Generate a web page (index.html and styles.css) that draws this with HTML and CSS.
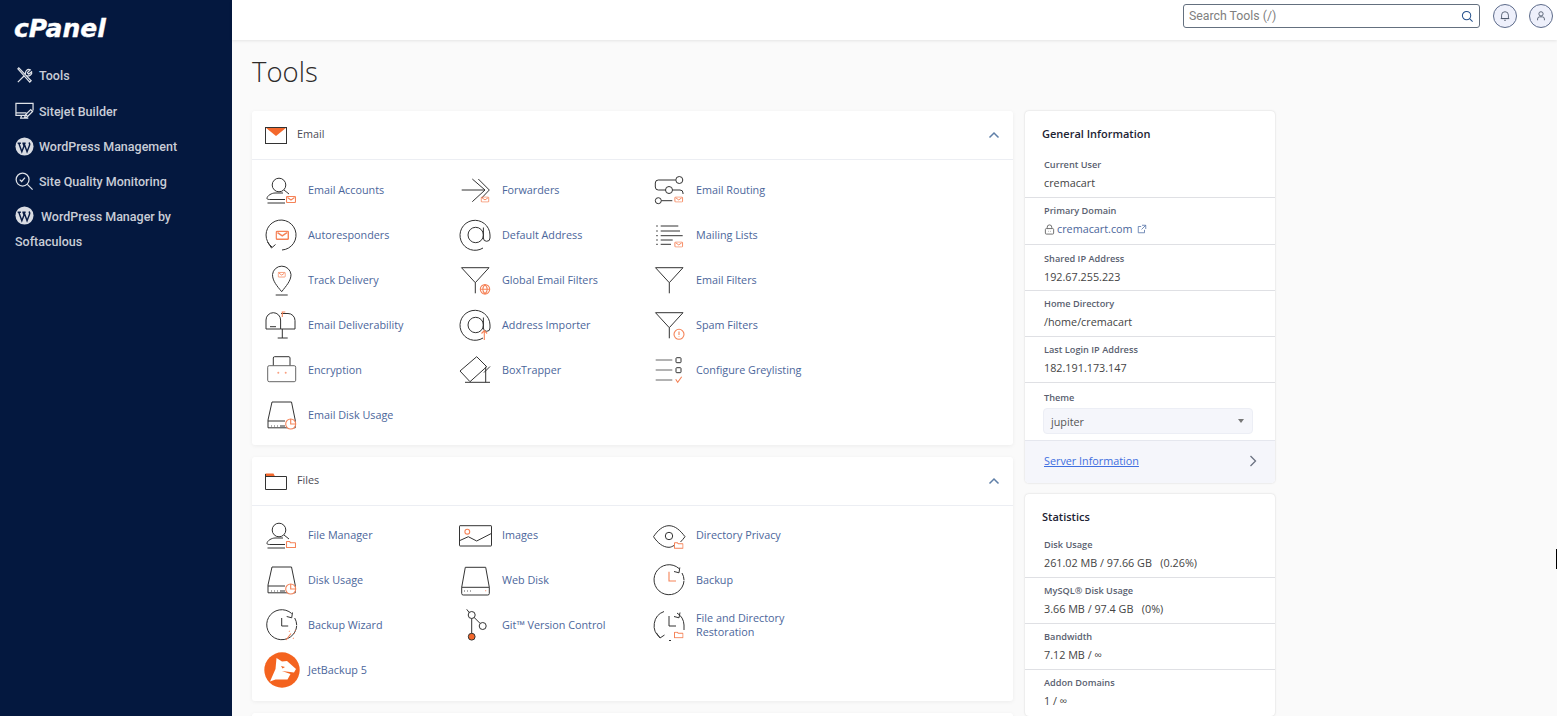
FILE: index.html
```html
<!DOCTYPE html>
<html lang="en">
<head>
<meta charset="utf-8">
<title>Tools - cPanel</title>
<link rel="stylesheet" href="styles.css">
</head>
<body>
<svg class="defs" width="0" height="0" aria-hidden="true">
  <symbol id="mail" viewBox="0 0 10 7"><rect class="o" x=".5" y=".5" width="9" height="6" rx="1"/><path class="o" d="M1.5 1.5 5 4l3.500-2.500"/></symbol>
  <symbol id="folder" viewBox="0 0 10 7"><path class="o" d="M.5 6V1a.5.5 0 0 1 .5-.5h2.500l1 1.200H9a.5.5 0 0 1 .5.5V6a.5.5 0 0 1-.5.5H1A.5.5 0 0 1 .5 6z"/></symbol>
  <symbol id="person" viewBox="0 0 34 34"><circle class="k" cx="14" cy="12" r="6.800"/><path class="k" d="m19 17 5 4"/><path class="k" d="M20 26.500H6c-2 0-4 0-4-1 0-3 5-5.500 8-5.500h8M2.500 30H20"/></symbol>
  <symbol id="disk" viewBox="0 0 34 34"><path class="k" d="M7 4h19.500l3.700 18v7.800H3V22zM3 23h17M6 28h.8M9 28h.8M12 28h.8M15 28h5"/></symbol>
  <symbol id="at" viewBox="0 0 34 34"><circle class="k" cx="16.700" cy="17" r="7.700"/><path class="k" d="M24.400 9.500V20a3.300 3.300 0 0 0 6.600 0v-3A15 15 0 1 0 24 30"/></symbol>
  <symbol id="funnel" viewBox="0 0 34 34"><path class="k" d="M2.500 4.700h27.500L16.300 19.700zM16.300 19.700v10.600"/></symbol>
  <symbol id="clock" viewBox="0 0 34 34"><path class="k" d="M26 5.500A15 15 0 1 0 31 17.700M26.800 4.500 26 9.800l-5-1.300M29 10a15 15 0 0 1 2 7"/></symbol>
  <symbol id="wp" viewBox="0 0 20 20"><circle class="wp-ring" cx="10" cy="10" r="9.500"/><path class="wp-w" d="M2.800 6.500h3.400M4 6.500l3.200 9 2.300-6-1-3M7.800 6.500h3.400M9.500 6.500l3.200 9 2.500-6.500c.6-1.500.2-2.500-.7-3"/></symbol>
</svg>

<div class="app">
  <aside class="sidebar">
    <div class="logo">cPanel</div>
    <nav class="nav">
      <a class="nav-item"><svg class="nav-ic" viewBox="0 0 20 20"><path class="w" d="m3 17 7-7M11 9c-1-3 2-6.500 5-5l-3 3 1.500 1.500 3-2.500c1 3-3 5.500-5.500 4M3 3l1-1 13 13.500-1.500 1.500z"/></svg><span>Tools</span></a>
      <a class="nav-item"><svg class="nav-ic" viewBox="0 0 20 20"><path class="w" d="M13 14H1V1.500h18V9M1 11.500h11M7 14l-1 3h8M16.500 8 11 13.500l-1 3 3-1L18.500 10z"/></svg><span>Sitejet Builder</span></a>
      <a class="nav-item"><svg class="nav-ic" viewBox="0 0 20 20"><use href="#wp"/></svg><span>WordPress Management</span></a>
      <a class="nav-item"><svg class="nav-ic" viewBox="0 0 20 20"><circle class="w" cx="8" cy="8" r="6.800"/><path class="w" d="m5 8 2 2 3.500-4M13 13l5.500 5.500"/></svg><span>Site Quality Monitoring</span></a>
      <a class="nav-item nav-wrap"><svg class="nav-ic nav-ic-in" viewBox="0 0 20 20"><use href="#wp"/></svg>WordPress Manager by Softaculous</a>
    </nav>
  </aside>

  <div class="main">
    <header class="topbar">
      <div class="search">
        <input class="search-input" type="text" placeholder="Search Tools (/)">
        <svg class="search-ic" viewBox="0 0 14 14"><circle class="b" cx="6" cy="6" r="4.500"/><path class="b" d="m9.500 9.500 3 3"/></svg>
      </div>
      <button class="round"><svg viewBox="0 0 14 14"><path class="g" d="M3 10V6a4 4 0 0 1 8 0v4zM2 10h10M6 12h2"/></svg></button>
      <button class="round"><svg viewBox="0 0 14 14"><circle class="g" cx="7" cy="4.500" r="2.500"/><path class="g" d="M3 12V10.500A2.500 2.500 0 0 1 5.500 8h3a2.500 2.500 0 0 1 2.500 2.500V12"/></svg></button>
    </header>

    <div class="content">
      <h1 class="title">Tools</h1>
      <div class="cols">
        <div class="col-left">
          <section class="card">
            <div class="card-head">
              <svg class="head-ic" viewBox="0 0 22 17"><path class="fill-o" d="M.5.500h21L11 9z"/><rect class="k" x=".5" y=".5" width="21" height="16"/></svg>
              <span class="head-name">Email</span>
              <svg class="chev" viewBox="0 0 12 8"><path d="m1.500 6.500 4.500-4.500 4.500 4.500"/></svg>
            </div>
            <div class="tools">
              <a class="tool"><svg class="ic" viewBox="0 0 34 34"><use href="#person"/><use href="#mail" x="21" y="23" width="10" height="7"/></svg><span>Email Accounts</span></a>
              <a class="tool"><svg class="ic" viewBox="0 0 34 34"><path class="k" d="M2.700 17H26M13.300 6 26 17 13.300 28.700M19.300 6l11 11-7.600 8"/><use href="#mail" x="21.500" y="23.500" width="9" height="6"/></svg><span>Forwarders</span></a>
              <a class="tool"><svg class="ic" viewBox="0 0 34 34"><circle class="k" cx="26.300" cy="7" r="3.500"/><path class="k" d="M22.700 7H5.300a3 3 0 0 0-3 3v4a3 3 0 0 0 3 3h7.400"/><circle class="k" cx="16" cy="17" r="3.500"/><path class="k" d="M19.500 17H27a3 3 0 0 1 3 3v1"/><circle class="k" cx="5.300" cy="27.700" r="3"/><path class="k" d="M8.300 27.700h11"/><use href="#mail" x="21" y="23.500" width="9.500" height="6"/></svg><span>Email Routing</span></a>

              <a class="tool"><svg class="ic" viewBox="0 0 34 34"><path class="k" d="M7 29A15 15 0 1 1 17 32"/><path class="k" d="M2.500 24 6.500 30l4-3.500"/><use href="#mail" x="10.500" y="12.500" width="13.500" height="9.500"/></svg><span>Autoresponders</span></a>
              <a class="tool"><svg class="ic" viewBox="0 0 34 34"><use href="#at"/></svg><span>Default Address</span></a>
              <a class="tool"><svg class="ic" viewBox="0 0 34 34"><path class="k" d="M3.200 8h1.600M3.200 13h1.600M3.200 17.700h1.600M3.200 22h1.600M3.200 26.300h1.600M7.700 8h17.600M7.700 13H27M7.700 17.700h22M7.700 22h12M7.700 26.300H18"/><use href="#mail" x="21" y="23.500" width="9.500" height="6"/></svg><span>Mailing Lists</span></a>

              <a class="tool"><svg class="ic" viewBox="0 0 34 34"><path class="k" d="M16.700 28.700C12 23 7.500 18 7.500 11.500a9.300 9.300 0 0 1 18.500 0C26 18 21 23 16.700 28.700zM10.700 32h12"/><use href="#mail" x="12.700" y="8.700" width="8" height="6"/></svg><span>Track Delivery</span></a>
              <a class="tool"><svg class="ic" viewBox="0 0 34 34"><use href="#funnel"/><circle class="o" cx="26" cy="26.300" r="4.700"/><path class="o" d="M21.300 26.300h9.400M26 21.600c-3 3-3 6.400 0 9.400M26 21.600c3 3 3 6.400 0 9.400"/></svg><span>Global Email Filters</span></a>
              <a class="tool"><svg class="ic" viewBox="0 0 34 34"><use href="#funnel"/></svg><span>Email Filters</span></a>

              <a class="tool"><svg class="ic" viewBox="0 0 34 34"><path class="k" d="M1 21v-9a7.300 7.300 0 0 1 14.600 0v9zM16 5.500h7a7 7 0 0 1 7 7V21H15.700M5 18.700h6M17.300 21v9M12.700 30h10"/><path class="o" d="M17.300 9V4h3"/></svg><span>Email Deliverability</span></a>
              <a class="tool"><svg class="ic" viewBox="0 0 34 34"><use href="#at"/><path class="o" d="M25.300 32V23M22.500 25.500l2.800-3 2.800 3"/></svg><span>Address Importer</span></a>
              <a class="tool"><svg class="ic" viewBox="0 0 34 34"><use href="#funnel"/><circle class="o" cx="26" cy="26.300" r="5"/><path class="o" d="M26 23.500v3.500M26 28.500v.6"/></svg><span>Spam Filters</span></a>

              <a class="tool"><svg class="ic" viewBox="0 0 34 34"><path class="k" d="M8.300 12.700V5a1.300 1.300 0 0 1 1.300-1.300H24A1.300 1.300 0 0 1 25 5v7.700"/><rect class="k k-grey" x="2.700" y="12.700" width="28" height="16" rx="1.500"/><circle class="fill-o2" cx="13.300" cy="19.700" r="1"/><circle class="fill-o2" cx="20.700" cy="19.700" r="1"/></svg><span>Encryption</span></a>
              <a class="tool"><svg class="ic" viewBox="0 0 34 34"><path class="k" d="m1 18 16.700-14.300 10 10L11 28.700zM6 29.300h25M26.700 13.700v15.600M31 13.500l-6 6"/></svg><span>BoxTrapper</span></a>
              <a class="tool"><svg class="ic" viewBox="0 0 34 34"><path class="k k-grey" d="M2.700 7h16.600M2.700 17h16.600M2.700 27h16.600"/><rect class="k" x="23" y="4.700" width="5" height="5" rx=".8"/><rect class="k" x="23" y="14.700" width="5" height="5" rx=".8"/><path class="o" d="m22.700 26.300 2 3 4-5.600"/></svg><span>Configure Greylisting</span></a>

              <a class="tool"><svg class="ic" viewBox="0 0 34 34"><use href="#disk"/><circle class="o fill-w" cx="25.700" cy="26" r="5"/><path class="o" d="M25.700 21v5h5"/></svg><span>Email Disk Usage</span></a>
            </div>
          </section>

          <section class="card">
            <div class="card-head">
              <svg class="head-ic" viewBox="0 0 22 17"><path class="fill-o" d="M.5 3.500V.5h8L10 3.500z"/><path class="k" d="M.5 1v15.500h21V3.500H.5"/></svg>
              <span class="head-name">Files</span>
              <svg class="chev" viewBox="0 0 12 8"><path d="m1.500 6.500 4.500-4.500 4.500 4.500"/></svg>
            </div>
            <div class="tools tools-files">
              <a class="tool"><svg class="ic" viewBox="0 0 34 34"><use href="#person"/><use href="#folder" x="21" y="23" width="10" height="7"/></svg><span>File Manager</span></a>
              <a class="tool"><svg class="ic" viewBox="0 0 34 34"><rect class="k" x=".5" y="7.700" width="32" height="20.300" rx=".5"/><path class="k" d="m.5 22.700 8.800-4 8.400 4.300 15-7.700"/><circle class="o" cx="8.300" cy="13.700" r="2.400"/></svg><span>Images</span></a>
              <a class="tool"><svg class="ic" viewBox="0 0 34 34"><path class="k" d="M.5 18.700C5 12 10 7.700 16 7.700s11 4.300 16 11c-1.500 2-3 3.700-4.500 5.300M21 27.500c-1.600.9-3.200 1.800-5 1.800-6 0-11-4-15.500-10.600"/><circle class="k" cx="16" cy="18" r="3.700"/><use href="#folder" x="21" y="24" width="9.500" height="7"/></svg><span>Directory Privacy</span></a>

              <a class="tool"><svg class="ic" viewBox="0 0 34 34"><use href="#disk"/><circle class="o fill-w" cx="25.700" cy="26" r="5"/><path class="o" d="M25.700 21v5h5"/></svg><span>Disk Usage</span></a>
              <a class="tool"><svg class="ic" viewBox="0 0 34 34"><path class="k" d="M6.300 4.300h20.400l3.600 20v6.200a1.500 1.500 0 0 1-1.500 1.500H4.200a1.500 1.500 0 0 1-1.500-1.500v-6.200zM2.700 24.300h27.600M5 28h.8M8 28h.8M11 28h.8"/><path class="o" d="M26.200 27.700h1"/></svg><span>Web Disk</span></a>
              <a class="tool"><svg class="ic" viewBox="0 0 34 34"><use href="#clock"/><path class="o" d="M16 8.700V18h7"/></svg><span>Backup</span></a>

              <a class="tool"><svg class="ic" viewBox="0 0 34 34"><use href="#clock" x=".7"/><path class="k" d="M16.700 10v8h6.500"/><path class="o" d="m21 32 5-6.500M29 25l.6.600M24 23l.6.600M28 30l.6.600M30 22l.6.600"/></svg><span>Backup Wizard</span></a>
              <a class="tool"><svg class="ic" viewBox="0 0 34 34"><circle class="k" cx="12.700" cy="7" r="3.500"/><circle class="k" cx="23.700" cy="18" r="3.500"/><circle class="fill-o k" cx="12.700" cy="28.700" r="3.400"/><path class="k" d="M7.700 1.300l2.600 3.400M12.700 10.500v15M15 9.300l6 6"/></svg><span>Git™ Version Control</span></a>
              <a class="tool"><svg class="ic" viewBox="0 0 34 34"><path class="k" d="M11 3.500A15 15 0 0 0 7 29.500M3.500 25l3.500 5 4.500-3M24 5a15 15 0 0 1 7 12v5M27 4.500 26 9.800 21 8.500M16 8v10h7M16 32.500h2"/><use href="#folder" x="21" y="23.500" width="9.500" height="7"/></svg><span>File and Directory<br>Restoration</span></a>

              <a class="tool"><svg class="ic ic-jb" viewBox="0 0 36 36"><circle class="jb-disc" cx="18" cy="18" r="17.700"/><path class="jb-dog" d="M6 29.500 11.500 17l1-11 5.500 3.500 5-.5 9 8-2 3.500-12-1.500 8.500 3-3 5.500H11.500zM17 14l1.500 2.500 2.500-1.500z"/></svg><span>JetBackup 5</span></a>
            </div>
          </section>

          <section class="card"></section>
        </div>

        <div class="col-right">
          <section class="info">
            <h2 class="info-title">General Information</h2>
            <div class="row row-tall"><div class="label">Current User</div><div class="value">cremacart</div></div>
            <div class="row row-tall row-up"><div class="label">Primary Domain</div><div class="value"><svg class="lock" viewBox="0 0 12 12"><rect class="g2" x="1.500" y="5" width="9" height="6" rx="1"/><path class="g2" d="M3.500 5V3.500a2.500 2.500 0 0 1 5 0V5M5 8h.5M7 8h.5"/></svg><a class="domain">cremacart.com</a><svg class="ext" viewBox="0 0 12 12"><path class="g3" d="M9 7v3.500H1.500V3H5M6 1.500h4.500V6M10.500 1.500 5.500 6.500"/></svg></div></div>
            <div class="row"><div class="label">Shared IP Address</div><div class="value">192.67.255.223</div></div>
            <div class="row row-up"><div class="label">Home Directory</div><div class="value">/home/cremacart</div></div>
            <div class="row row-up"><div class="label">Last Login IP Address</div><div class="value">182.191.173.147</div></div>
            <div class="row row-theme">
              <div class="label">Theme</div>
              <div class="select"><span>jupiter</span><span class="caret"></span></div>
            </div>
            <div class="server"><a class="server-link">Server Information</a><svg class="server-chev" viewBox="0 0 8 12"><path d="m1.500 1 5 5-5 5"/></svg></div>
          </section>

          <section class="info">
            <h2 class="info-title info-title-stats">Statistics</h2>
            <div class="row row-up"><div class="label">Disk Usage</div><div class="value">261.02 MB / 97.66 GB &nbsp; (0.26%)</div></div>
            <div class="row row-up"><div class="label">MySQL® Disk Usage</div><div class="value">3.66 MB / 97.4 GB &nbsp; (0%)</div></div>
            <div class="row row-up"><div class="label">Bandwidth</div><div class="value">7.12 MB / ∞</div></div>
            <div class="row row-up"><div class="label">Addon Domains</div><div class="value">1 / ∞</div></div>
          </section>
        </div>
      </div>
    </div>
  </div>
</div>
<div class="edge-mark"></div>
</body>
</html>
```

FILE: styles.css
```css
* { box-sizing: border-box; }
html, body { margin: 0; height: 716px; overflow: hidden; }
body { font-family: "Open Sans", "Liberation Sans", sans-serif; background: #fafafa; color: #444; }
.defs { position: absolute; }
.edge-mark { position: absolute; top: 549px; right: 0; width: 1px; height: 20px; background: #000; }

.k { fill: none; stroke: #333; stroke-width: 1; }
.k-grey { stroke: #666; }
.o { fill: none; stroke: #f58358; stroke-width: 1.100; }
.k.fill-o, .fill-o { fill: #f4682c; }
.fill-o2 { fill: #f9a080; }
.o.fill-w { fill: #fff; }
.w { fill: none; stroke: #dfe2e8; stroke-width: 1.300; }
.b { fill: none; stroke: #24508c; stroke-width: 1.100; }
.g { fill: none; stroke: #4a5568; stroke-width: 1; }
.g2 { fill: none; stroke: #666; stroke-width: 1; }
.g3 { fill: none; stroke: #5b78ab; stroke-width: 1; }
.wp-ring { fill: #d9dce3; }
.wp-w { fill: none; stroke: #0a1c44; stroke-width: 1.500; }

.app { display: flex; height: 716px; }

.sidebar { width: 232px; flex: none; background: #04183f; color: #c9cdd7; }
.logo { padding: 14px 0 0 14px; height: 58.200px; font-family: "DejaVu Sans", sans-serif; font-weight: 700; font-style: italic; font-size: 25px; line-height: 30px; color: #fff; -webkit-text-stroke: .4px #fff; }
.nav { display: flex; flex-direction: column; padding-left: 15px; font-family: Roboto, "Liberation Sans", sans-serif; font-size: 12.500px; font-weight: 500; }
.nav-item { display: flex; align-items: center; height: 35.300px; gap: 5px; }
.nav-wrap { display: block; height: auto; padding-top: 5px; line-height: 25px; padding-right: 40px; }
.nav-ic { width: 19px; height: 19px; flex: none; }
.nav-ic-in { vertical-align: -4px; margin-right: 7px; }

.main { flex: 1; min-width: 0; display: flex; flex-direction: column; }
.topbar { height: 40px; flex: none; display: flex; align-items: center; justify-content: flex-end; gap: 12px; padding: 0 4px 8px 0; background: #fff; box-shadow: 0 1px 3px rgba(0, 0, 0, .09); }
.search { display: flex; align-items: center; width: 297px; height: 24px; margin-right: 1px; border: 1px solid #64707f; border-radius: 3px; background: #fff; padding: 0 5px; }
.search-input { flex: 1; min-width: 0; border: 0; outline: 0; padding: 0; background: transparent; font-family: Roboto, "Liberation Sans", sans-serif; font-size: 12.300px; color: #777; }
.search-input::placeholder { color: #808080; opacity: 1; }
.search-ic { width: 13px; height: 13px; flex: none; }
.round { width: 24px; height: 24px; padding: 5px; border: 1px solid #5d6b8a; border-radius: 50%; background: #eef0fb; display: flex; }
.round svg { width: 100%; height: 100%; }

.content { flex: 1; min-height: 0; padding: 13px 0 0 20px; overflow: hidden; }
.title { margin: 0 0 20px; font-size: 27.500px; line-height: 38px; font-weight: 300; color: #2e2b2a; }
.cols { display: flex; gap: 12px; align-items: flex-start; }
.col-left { width: 761px; display: flex; flex-direction: column; gap: 12px; }
.col-right { width: 250px; display: flex; flex-direction: column; gap: 11px; }

.card { background: #fff; border-radius: 3px; box-shadow: 0 1px 4px rgba(0, 0, 0, .06); min-height: 40px; }
.card-head { display: flex; align-items: center; height: 49px; padding: 0 13px; border-bottom: 1px solid #eceef3; }
.head-ic { width: 22px; height: 17px; flex: none; margin-right: 10px; }
.head-name { flex: 1; margin-top: -3px; font-size: 10.800px; color: #4b4b55; }
.chev { width: 12px; height: 8px; fill: none; stroke: #5f7fa8; stroke-width: 1.500; }

.tools { display: grid; grid-template-columns: repeat(3, 194px); grid-auto-rows: 45px; padding: 7.500px 13px; }
.tools-files { padding: 6.500px 13px 8.500px; }
.tool { display: flex; align-items: center; gap: 9px; font-size: 10.800px; line-height: 14px; color: #4b669b; }
.ic { width: 34px; height: 34px; flex: none; }
.ic-jb { width: 36px; height: 36px; margin: 0 -1px 0 -1px; }
.jb-disc { fill: #f4631f; }
.jb-dog { fill: #fff; fill-rule: evenodd; }

.info { background: #fff; border-radius: 4px; box-shadow: 0 0 2px rgba(0, 0, 0, .18); overflow: hidden; }
.info-title { margin: 0; padding: 14px 17px 8px; font-size: 11px; line-height: 18px; font-weight: 600; color: #1c2333; }
.info-title-stats { padding-bottom: 6px; }
.row { height: 46px; padding: 7px 19px 0; border-bottom: 1px solid #dfe0e4; }
.row:last-child { border-bottom: 0; }
.row-tall { height: 47px; }
.row-up { padding-top: 6px; }
.label { font-size: 9.200px; line-height: 13px; font-weight: 600; color: #5a5f70; }
.value { display: flex; align-items: center; margin-top: 3px; font-size: 10.800px; line-height: 18px; color: #444; white-space: pre; }
.lock { width: 11px; height: 11px; margin-right: 2px; }
.domain { color: #4b669b; }
.ext { width: 10px; height: 10px; margin-left: 4px; }

.row-theme { height: 58px; padding-top: 8px; border-bottom-color: #e5e7ee; }
.select { display: flex; align-items: center; justify-content: space-between; height: 26px; margin: 4px 3px 0 -1px; padding: 0 8px 0 7px; background: #f5f6fb; border: 1px solid #eceef5; border-radius: 4px; font-size: 10.800px; color: #555; }
.caret { width: 0; height: 0; border-left: 3px solid transparent; border-right: 3px solid transparent; border-top: 4px solid #777; }

.server { display: flex; align-items: center; justify-content: space-between; height: 42px; padding: 0 19px 3px; background: #f5f6fb; }
.server-link { font-size: 10.800px; color: #3f6fe0; text-decoration: underline; }
.server-chev { width: 8px; height: 12px; fill: none; stroke: #6b7280; stroke-width: 1.300; margin-right: -1px; }
```
